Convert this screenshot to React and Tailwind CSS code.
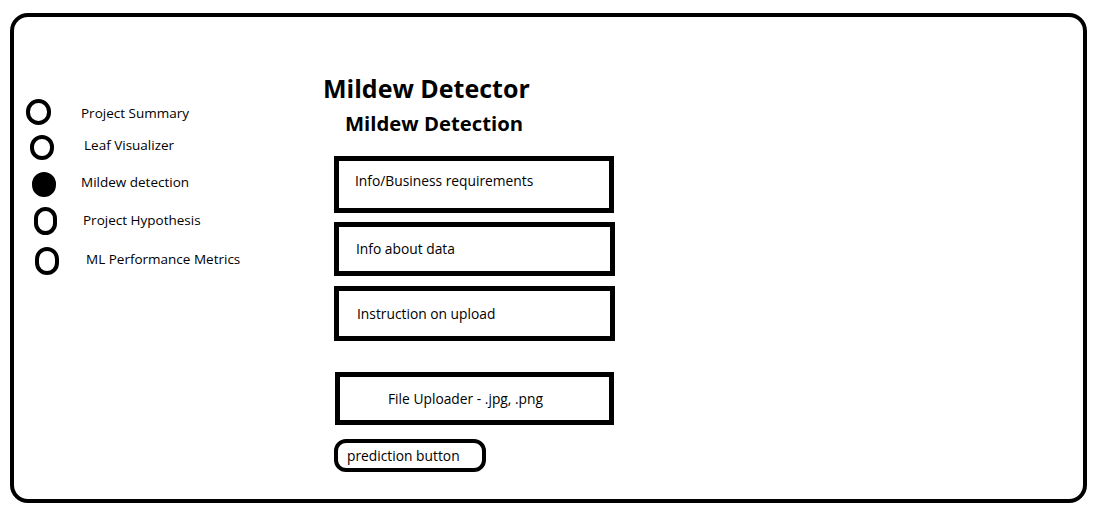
import React from 'react';

const pages = [
  { label: 'Project Summary', circle: 'ml-[12px] w-[25px] h-[26px]', gap: 'ml-[30px]', row: 'mt-0', text: '-mb-[4px]' },
  { label: 'Leaf Visualizer', circle: 'ml-[16px] w-[24px] h-[25px]', gap: 'ml-[30px]', row: 'mt-[7px]', text: 'mb-[2px]' },
  { label: 'Mildew detection', circle: 'ml-[18px] w-[24px] h-[25px]', gap: 'ml-[25px]', row: 'mt-[9px]', text: 'mb-[3px]', active: true },
  { label: 'Project Hypothesis', circle: 'ml-[20px] w-[23px] h-[28px]', gap: 'ml-[26px]', row: 'mt-[9px]', text: 'mb-[1px]' },
  { label: 'ML Performance Metrics', circle: 'ml-[21px] w-[24px] h-[28px]', gap: 'ml-[27px]', row: 'mt-[12px]', text: 'mb-[2px]' },
];

function NavItem({ page }) {
  return (
    <div className={`flex items-center h-[28px] shrink-0 ${page.row}`}>
      <span
        className={`${page.circle} shrink-0 rounded-full border-4 border-black ${page.active ? 'bg-black' : 'bg-white'}`}
      />
      <span className={`${page.gap} ${page.text} text-[13.5px] leading-none text-black whitespace-nowrap`}>
        {page.label}
      </span>
    </div>
  );
}

export default function App() {
  return (
    <div
      className="w-[1106px] h-[515px] bg-white overflow-hidden pt-[13px] pl-[10px]"
      style={{ fontFamily: '"Open Sans", "Noto Sans", sans-serif' }}
    >
      <div className="w-[1077px] h-[490px] border-4 border-black rounded-[18px] flex">
        {/* sidebar radio list */}
        <div className="w-[309px] shrink-0 pt-[81px] flex flex-col">
          {pages.map((p) => (
            <NavItem key={p.label} page={p} />
          ))}
        </div>

        {/* main page */}
        <div className="flex-1 pt-[59px] flex flex-col items-start">
          <h1 className="shrink-0 text-[25px] leading-none font-bold text-black whitespace-nowrap">Mildew Detector</h1>
          <h2 className="shrink-0 ml-[22px] mt-[12px] text-[20.3px] leading-none font-bold text-black whitespace-nowrap">
            Mildew Detection
          </h2>

          <div className="shrink-0 ml-[11px] mt-[23px] w-[280px] h-[57px] border-[5px] border-black flex items-center pl-[16px] pb-[6px]">
            <span className="text-[13.8px] text-black">Info/Business requirements</span>
          </div>
          <div className="shrink-0 ml-[11px] mt-[9px] w-[281px] h-[54px] border-[5px] border-black flex items-center pl-[17px]">
            <span className="text-[13.8px] text-black">Info about data</span>
          </div>
          <div className="shrink-0 ml-[11px] mt-[10px] w-[281px] h-[55px] border-[5px] border-black flex items-center pl-[18px] pt-[1px]">
            <span className="text-[13.8px] text-black">Instruction on upload</span>
          </div>
          <div className="shrink-0 ml-[12px] mt-[31px] w-[279px] h-[53px] border-[5px] border-black flex items-center pl-[48px] pt-[2px]">
            <span className="text-[13.8px] text-black">File Uploader - .jpg, .png</span>
          </div>
          <button className="shrink-0 ml-[11px] mt-[14px] w-[152px] h-[33px] border-4 border-black rounded-[12px] flex items-center pl-[9px] pt-[1px] bg-white">
            <span className="text-[13.8px] text-black">prediction button</span>
          </button>
        </div>
      </div>
    </div>
  );
}
